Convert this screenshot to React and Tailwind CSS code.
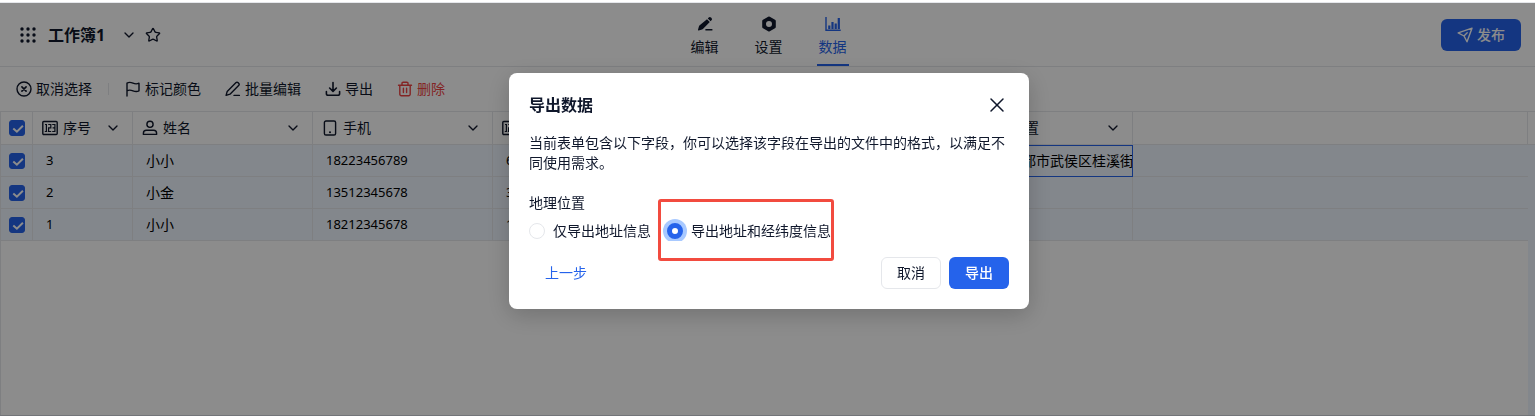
import { useState } from "react";
import { ChevronDown, Star, X } from "lucide-react";

const NumberIcon = () => (
  <svg viewBox="0 0 16 16" className="size-4 shrink-0" fill="none" stroke="currentColor" strokeWidth="1.4">
    <rect x="0.8" y="1.5" width="14.4" height="13" rx="1" />
    <path d="M3 4.500h1.400v7M2.800 11.500h2.400M6.200 4.500h2.600v3.300H6.600v3.700h2.600M10.200 4.500h2.700v7h-2.700M10.600 7.900h2.200" strokeWidth="1.2" />
  </svg>
);

const UserIcon = () => (
  <svg viewBox="0 0 16 16" className="size-4 shrink-0" fill="none" stroke="currentColor" strokeWidth="1.4" strokeLinejoin="round">
    <circle cx="8" cy="4.300" r="3.100" />
    <path d="M1.400 14.400v-1.200a3 3 0 0 1 3-3h7.200a3 3 0 0 1 3 3v1.200z" />
  </svg>
);

const PhoneIcon = () => (
  <svg viewBox="0 0 16 16" className="size-4 shrink-0" fill="none" stroke="currentColor" strokeWidth="1.4">
    <rect x="2.400" y="1" width="11.200" height="14" rx="1.600" />
    <circle cx="8" cy="12.200" r="1" fill="currentColor" stroke="none" />
  </svg>
);

const ToolIcon = ({ children }) => (
  <svg
    viewBox="0 0 16 16"
    className="size-4 shrink-0"
    fill="none"
    stroke="currentColor"
    strokeWidth="1.4"
    strokeLinecap="round"
    strokeLinejoin="round"
  >
    {children}
  </svg>
);

const tabs = [
  {
    name: "编辑",
    icon: (
      <svg viewBox="0 0 16 16" className="size-4" fill="currentColor">
        <path d="M10 3.200 12.800 6l-6.900 7a2 2 0 0 1-.9.5l-3.300.9a.6.6 0 0 1-.7-.7l.9-3.200a2 2 0 0 1 .5-.9z" />
        <path d="m10.800 2.400.9-.9a1.600 1.600 0 0 1 2.300 0l.5.5a1.600 1.600 0 0 1 0 2.300l-.9.900zM8.400 13h7v1.600h-7z" />
      </svg>
    ),
  },
  {
    name: "设置",
    icon: (
      <svg viewBox="0 0 16 16" className="size-4" fill="currentColor" fillRule="evenodd">
        <path d="M7.200.7a1.600 1.600 0 0 1 1.600 0l5.200 3a1.600 1.600 0 0 1 .8 1.400v5.800a1.600 1.600 0 0 1-.8 1.400l-5.200 3a1.600 1.600 0 0 1-1.600 0l-5.200-3a1.600 1.600 0 0 1-.8-1.400V5.100A1.600 1.600 0 0 1 2 3.700zM8 5a3 3 0 1 0 0 6 3 3 0 0 0 0-6z" />
      </svg>
    ),
  },
  {
    name: "数据",
    icon: (
      <svg viewBox="0 0 16 16" className="size-4" fill="currentColor">
        <path d="M.3 1h1.400v12.600h14V15H.3zM3.200 9.500h2.200V13H3.200zM6.400 6h2.200v7H6.400zM9.600 7.500h2.200V13H9.600zM12.700 2h2.200v11h-2.200z" />
      </svg>
    ),
  },
];

const columns = [
  { key: "index", name: "序号", icon: <NumberIcon /> },
  { key: "name", name: "姓名", icon: <UserIcon /> },
  { key: "phone", name: "手机", icon: <PhoneIcon /> },
  { key: "count", name: "数字", icon: <NumberIcon /> },
  { key: "text", name: "", icon: null },
  { key: "note", name: "", icon: null },
  { key: "address", name: "地理位置", icon: <PhoneIcon /> },
];

const rows = [
  { index: "3", name: "小小", phone: "18223456789", count: "6", address: "四川省成都市武侯区桂溪街道" },
  { index: "2", name: "小金", phone: "13512345678", count: "3", address: "" },
  { index: "1", name: "小小", phone: "18212345678", count: "1", address: "" },
];

const Checkbox = ({ label }) => (
  <span className="ml-2 grid size-4">
    <input
      type="checkbox"
      defaultChecked
      aria-label={label}
      className="peer col-start-1 row-start-1 size-4 appearance-none rounded-[3px] border border-slate-300 checked:border-[#2563eb] checked:bg-[#2563eb]"
    />
    <svg viewBox="0 0 16 16" className="pointer-events-none col-start-1 row-start-1 size-4 opacity-0 peer-checked:opacity-100" fill="none" stroke="white" strokeWidth="2">
      <path d="m4.300 8.400 3.600 3.300 6-5.900" />
    </svg>
  </span>
);

const Header = () => (
  <header className="grid h-16 shrink-0 grid-cols-[1fr_auto_1fr] border-b border-gray-200 pr-3.5 pl-4">
    <div className="flex items-center">
      <button type="button" aria-label="应用" className="p-1">
        <svg viewBox="0 0 16 16" className="size-4" fill="currentColor">
          {[2, 8, 14].map((y) => [2, 8, 14].map((x) => <circle key={`${x}-${y}`} cx={x} cy={y} r="1.7" />))}
        </svg>
      </button>
      <h1 className="ml-2 text-base font-bold">工作簿1</h1>
      <button type="button" aria-label="更多" className="ml-4">
        <ChevronDown className="size-4" strokeWidth={2} />
      </button>
      <button type="button" aria-label="收藏" className="ml-2">
        <Star className="size-4" strokeWidth={2} />
      </button>
    </div>

    <nav className="flex gap-8">
      {tabs.map((tab) => {
        const active = tab.name === "数据";
        return (
          <a
            key={tab.name}
            href="#"
            className={`flex w-8 flex-col items-center gap-[3px] border-b-2 pt-[13px] text-sm/6 ${
              active ? "border-[#2563eb] text-[#2563eb]" : "border-transparent"
            }`}
          >
            {tab.icon}
            <span className="whitespace-nowrap">{tab.name}</span>
          </a>
        );
      })}
    </nav>

    <div className="flex items-center justify-end">
      <button type="button" className="flex h-8 items-center gap-1 rounded-md bg-[#2563eb] px-4 text-sm font-medium text-white">
        <ToolIcon>
          <path d="M15 1.200 1.200 5.900 7 9l3 5.800zM7 9l3.200-3.200" />
        </ToolIcon>
        发布
      </button>
    </div>
  </header>
);

const Toolbar = () => (
  <div className="flex h-11 shrink-0 items-center gap-6 px-4 text-sm">
    <div className="flex items-center gap-4">
      <button type="button" className="flex items-center gap-1">
        <ToolIcon>
          <circle cx="8" cy="8" r="7" />
          <path d="m5.900 5.900 4.200 4.200M10.100 5.900l-4.200 4.200" strokeWidth="1.600" />
        </ToolIcon>
        取消选择
      </button>
      <span className="h-3 w-px bg-gray-200" />
      <button type="button" className="flex items-center gap-1">
        <ToolIcon>
          <path d="M2 15V2.200c2-1.300 4-.9 6 0s4 1 6 0v7.600c-2 1-4 .8-6 0s-4-1.200-6 0" />
        </ToolIcon>
        标记颜色
      </button>
    </div>
    <button type="button" className="flex items-center gap-1">
      <ToolIcon>
        <path d="m2.200 10.400 8.600-8.600a1.700 1.700 0 0 1 2.400 0l.4.400a1.700 1.700 0 0 1 0 2.400L5 13.200l-3.900 1.200zM9 14.400h5.400" />
      </ToolIcon>
      批量编辑
    </button>
    <button type="button" className="flex items-center gap-1">
      <ToolIcon>
        <path d="M8 1.500v8.700M4.600 7 8 10.400 11.400 7M1.400 10.500v2.300a1.500 1.500 0 0 0 1.500 1.500h10.200a1.500 1.500 0 0 0 1.500-1.500v-2.300" strokeWidth="1.600" />
      </ToolIcon>
      导出
    </button>
    <button type="button" className="flex items-center gap-1 text-[#ef4444]">
      <ToolIcon>
        <path d="M1.500 4.200h13M5 4V2.300A1.100 1.100 0 0 1 6.100 1.200h3.800A1.100 1.100 0 0 1 11 2.300V4M2.800 4.300v8.900a1.500 1.500 0 0 0 1.500 1.500h7.400a1.500 1.500 0 0 0 1.500-1.500V4.300M6.400 7.200v4.300M9.600 7.200v4.300" />
      </ToolIcon>
      删除
    </button>
  </div>
);

const DataTable = () => (
  <div className="flex grow border-t border-l border-gray-200">
    <div className="min-w-0 grow">
      <table className="w-full table-fixed border-separate border-spacing-0 text-sm">
        <colgroup>
          <col className="w-8" />
          <col className="w-[100px]" />
          <col className="w-[180px]" />
          <col className="w-[180px]" />
          <col className="w-[100px]" />
          <col className="w-[180px]" />
          <col className="w-[180px]" />
          <col className="w-[180px]" />
          <col />
        </colgroup>
        <thead>
          <tr className="h-[33px]">
            <th className="border-r border-b border-gray-200 p-0">
              <Checkbox label="全选" />
            </th>
            {columns.map((col) => (
              <th key={col.key} className="border-r border-b border-gray-200 py-0 pr-[11px] pl-[9px] font-normal">
                <div className="flex items-center gap-[5px]">
                  {col.icon}
                  {col.name}
                  <ChevronDown className="ml-auto size-4" strokeWidth={2} />
                </div>
              </th>
            ))}
            <th className="border-r border-b border-gray-200 p-0" />
          </tr>
        </thead>
        <tbody className="bg-blue-50">
          {rows.map((row) => (
            <tr key={row.index} className="h-8">
              <td className="border-r border-b border-gray-200 p-0">
                <Checkbox label={`选择第${row.index}行`} />
              </td>
              {columns.map((col) => (
                <td
                  key={col.key}
                  className={`overflow-hidden border-r border-b border-gray-200 py-0 pl-[13px] whitespace-nowrap text-black ${
                    col.key === "address" && row.address ? "outline outline-1 -outline-offset-1 outline-[#2563eb]" : ""
                  } ${/^\d+$/.test(row[col.key]) ? "text-[13px]" : ""}`}
                >
                  {row[col.key]}
                </td>
              ))}
              <td className="border-b border-gray-200 p-0" />
            </tr>
          ))}
        </tbody>
      </table>
    </div>
    {/* scrollbar gutter */}
    <div className="flex w-[7px] shrink-0 flex-col">
      <div className="h-[33px] border-b border-gray-200" />
      <div className="grow bg-blue-50" />
    </div>
  </div>
);

const ExportDialog = () => {
  const [format, setFormat] = useState("full");

  const options = [
    { value: "address", label: "仅导出地址信息" },
    { value: "full", label: "导出地址和经纬度信息" },
  ];

  return (
    <div className="fixed inset-x-0 top-[3px] bottom-0 flex items-start justify-center bg-black/45 pt-[70px] pl-[3px]">
      <div
        role="dialog"
        aria-labelledby="export-title"
        className="w-full max-w-[520px] rounded-lg bg-white p-5 text-sm/5 shadow-[0_6px_24px_rgba(0,0,0,0.2)]"
      >
        <div className="flex items-center justify-between">
          <h2 id="export-title" className="text-base/6 font-bold">导出数据</h2>
          <button type="button" aria-label="关闭">
            <X className="size-6" strokeWidth={1.5} />
          </button>
        </div>
        <p className="mt-4">
          当前表单包含以下字段，你可以选择该字段在导出的文件中的格式，以满足不同使用需求。
        </p>

        <div role="radiogroup" aria-labelledby="export-field" className="relative mt-5">
          <div id="export-field">地理位置</div>
          <div className="flex gap-4 overflow-hidden pt-2">
            {options.map((option) => (
              <label key={option.value} className="flex items-center gap-2 whitespace-nowrap">
                <input
                  type="radio"
                  name="format"
                  value={option.value}
                  checked={format === option.value}
                  onChange={() => setFormat(option.value)}
                  className="size-4 appearance-none rounded-full border border-gray-200 bg-white checked:border-[5px] checked:border-[#2563eb] checked:ring-4 checked:ring-[#a8c9ff]"
                />
                {option.label}
              </label>
            ))}
          </div>
          <div className="pointer-events-none absolute top-1.5 left-[129px] h-[62px] w-44 rounded-[3px] border-3 border-[#f24b3f]" />
        </div>

        <div className="mt-4 flex items-center gap-2">
          <button type="button" className="h-8 px-4 text-[#2563eb]">上一步</button>
          <button type="button" className="ml-auto h-8 rounded-md border border-gray-200 px-[15px]">取消</button>
          <button type="button" className="h-8 rounded-md bg-[#2563eb] px-4 font-medium text-white">导出</button>
        </div>
      </div>
    </div>
  );
};

const App = () => {
  return (
    <div className="flex min-h-screen flex-col border-b border-gray-300 bg-white font-['Noto_Sans','Noto_Sans_CJK_SC',sans-serif] text-slate-900">
      <div className="h-[3px] shrink-0 border-b border-gray-200" />
      <Header />
      <Toolbar />
      <DataTable />
      <ExportDialog />
    </div>
  );
};

export default App;
